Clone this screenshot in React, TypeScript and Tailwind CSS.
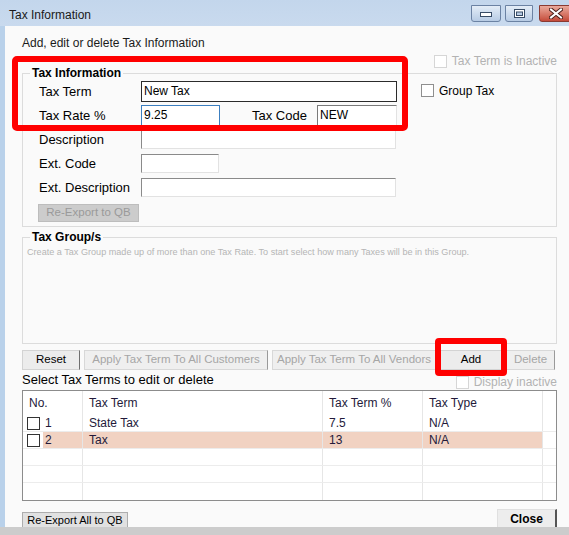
import React from "react"

const rows = [
  { no: "1", term: "State Tax", pct: "7.5", type: "N/A", selected: false },
  { no: "2", term: "Tax", pct: "13", type: "N/A", selected: true },
  { no: "", term: "", pct: "", type: "", selected: false },
  { no: "", term: "", pct: "", type: "", selected: false },
  { no: "", term: "", pct: "", type: "", selected: false },
]

const CheckBox = ({ className }: { className: string }) => (
  <span className={`inline-block shrink-0 bg-white border ${className}`} />
)

const TitleBar = () => (
  <div className="h-[26px] flex items-start bg-gradient-to-b from-[#c3d6ec] to-[#c9daee]">
    <span className="pl-[9px] pt-[7px] text-[12px] leading-[16px] text-[#1a1a1a]">
      Tax Information
    </span>
    <div className="ml-auto flex items-start gap-[4px] pt-[5px] -mr-[15px]">
      <div className="w-[30px] h-[17px] flex items-center justify-center border border-[#6b82a3] rounded-b-[3px] bg-gradient-to-b from-[#e4edf7] to-[#b7cbe4]">
        <svg width="12" height="6" viewBox="0 0 12 6">
          <rect x="0.5" y="1.5" width="11" height="4" fill="#fff" stroke="#384c66" />
        </svg>
      </div>
      <div className="w-[28px] h-[17px] flex items-center justify-center border border-[#6b82a3] rounded-b-[3px] bg-gradient-to-b from-[#e4edf7] to-[#b7cbe4]">
        <svg width="11" height="9" viewBox="0 0 11 9">
          <rect x="0.5" y="0.5" width="10" height="8" fill="#fff" stroke="#384c66" />
          <rect x="2.5" y="3" width="6" height="3.5" fill="#b7cbe4" stroke="#384c66" />
        </svg>
      </div>
      <div className="ml-[2px] w-[45px] h-[17px] flex items-center justify-start pl-[9px] border border-[#8a3a32] rounded-b-[3px] bg-gradient-to-b from-[#e9a99c] to-[#c44a3a]">
        <svg width="14" height="11" viewBox="0 0 14 11">
          <path d="M2 1.5 L12 9.5 M12 1.5 L2 9.5" stroke="#4a1f1a" strokeWidth="4" strokeLinecap="square" />
          <path d="M2 1.5 L12 9.5 M12 1.5 L2 9.5" stroke="#ffffff" strokeWidth="2" strokeLinecap="square" />
        </svg>
      </div>
    </div>
  </div>
)

const Label = ({ children }: { children: React.ReactNode }) => (
  <span className="w-[102px] shrink-0 text-[13px] leading-[22px] text-black">{children}</span>
)

const inputSunken = "bg-white border border-[#8a8a8a] border-r-[#e2e2e2] border-b-[#e2e2e2]"

export default function App() {
  return (
    <div className="relative w-[569px] h-[535px] overflow-hidden bg-[#cccccc] font-['Liberation_Sans',Arial,sans-serif]">
      <TitleBar />
      <div className="flex h-[501px]">
        <div className="w-[5px] bg-[#b9d1ea]" />
        <div className="flex-1 bg-[#fafafa] pl-[17px] pr-[12px] overflow-hidden">
          <div className="pt-[9px] text-[12px] leading-[16px] text-[#1a1a1a]">
            Add, edit or delete Tax Information
          </div>
          <div className="mt-[3px] h-[14px] flex items-center justify-end gap-[5px]">
            <CheckBox className="w-[13px] h-[13px] border-[#d6d6d6]" />
            <span className="text-[12px] text-[#b3b3b3]">Tax Term is Inactive</span>
          </div>

          <fieldset className="-mt-[2px] border border-[#dcdcdc] pb-[4px]">
            <legend className="ml-[7px] px-[2px] text-[12px] leading-[14px] font-bold text-black">
              Tax Information
            </legend>
            <div className="flex pt-[1px]">
              <div className="flex flex-col gap-[3px] pl-[16px]">
                <div className="flex h-[21px]">
                  <Label>Tax Term</Label>
                  <div className="w-[256px] h-[21px] bg-white border border-[#2b2b2b] px-[2px] text-[12px] leading-[19px] text-black">
                    New Tax
                  </div>
                </div>
                <div className="flex h-[21px]">
                  <Label>Tax Rate %</Label>
                  <div className="w-[79px] h-[21px] bg-white border border-[#3c7fc0] px-[2px] text-[12px] leading-[19px] text-black">
                    9.25
                  </div>
                  <span className="ml-[32px] w-[65px] text-[13px] leading-[22px] text-black">Tax Code</span>
                  <div className="w-[80px] h-[21px] bg-white border border-[#7a7a7a] border-r-[#e2e2e2] border-b-[#e2e2e2] px-[2px] text-[12px] leading-[19px] text-black">
                    NEW
                  </div>
                </div>
                <div className="flex h-[21px]">
                  <Label>Description</Label>
                  <div className={`w-[255px] h-[19px] mt-[1px] ${inputSunken}`} />
                </div>
                <div className="flex h-[21px]">
                  <Label>Ext. Code</Label>
                  <div className={`w-[78px] h-[19px] mt-[1px] ${inputSunken}`} />
                </div>
                <div className="flex h-[21px]">
                  <Label>Ext. Description</Label>
                  <div className={`w-[255px] h-[19px] mt-[1px] ${inputSunken}`} />
                </div>
                <div className="mt-[3px] -ml-[1px] w-[101px] h-[18px] flex items-center justify-center bg-[#cccccc] border border-[#bdbdbd] text-[11.5px] text-[#9a9a9a]">
                  Re-Export to QB
                </div>
              </div>
              <div className="ml-[24px] mt-[3px] h-[13px] flex items-center gap-[5px]">
                <CheckBox className="w-[13px] h-[13px] border-[#8f8f8f]" />
                <span className="text-[12px] text-black">Group Tax</span>
              </div>
            </div>
          </fieldset>

          <fieldset className="mt-[3px] h-[114px] border border-[#dcdcdc]">
            <legend className="ml-[7px] px-[2px] text-[12px] leading-[14px] font-bold text-black">
              Tax Group/s
            </legend>
            <div className="mt-[2px] pl-[4px] text-[9.1px] leading-[12px] text-[#b5b5b5] whitespace-nowrap">
              Create a Tax Group made up of more than one Tax Rate. To start select how many Taxes will be in this Group.
            </div>
          </fieldset>

          <div className="mt-[6px] flex gap-[4px] h-[20px] text-[11.5px] whitespace-nowrap">
            <div className="w-[58px] flex items-center justify-center bg-[#ececec] border border-[#d3d3d3] border-r-[#6f6f6f] text-black">
              Reset
            </div>
            <div className="w-[184px] flex items-center justify-center bg-[#efefef] border border-[#d8d8d8] border-r-[#9a9a9a] text-[#a6a6a6]">
              Apply Tax Term To All Customers
            </div>
            <div className="w-[164px] flex items-center justify-center bg-[#efefef] border border-[#d8d8d8] border-r-[#9a9a9a] text-[#a6a6a6]">
              Apply Tax Term To All Vendors
            </div>
            <div className="w-[62px] flex items-center justify-center bg-[#ececec] border border-[#d3d3d3] text-black">
              Add
            </div>
            <div className="w-[49px] flex items-center justify-center bg-[#efefef] border border-[#d8d8d8] border-r-[#9a9a9a] text-[#a6a6a6]">
              Delete
            </div>
          </div>

          <div className="mt-[2px] h-[16px] flex items-center">
            <span className="text-[13px] leading-[16px] text-black">Select Tax Terms to edit or delete</span>
            <div className="ml-auto flex items-center gap-[5px] pt-[4px]">
              <CheckBox className="w-[13px] h-[13px] border-[#d6d6d6]" />
              <span className="text-[12px] text-[#b3b3b3]">Display inactive</span>
            </div>
          </div>

          <div className="mt-[2px] border border-[#8c8c8c] bg-white text-[12px] text-[#231a3a]">
            <div className="flex h-[24px]">
              <div className="w-[60px] pl-[6px] flex items-center border-r border-[#e6e6e6]">No.</div>
              <div className="w-[240px] pl-[6px] flex items-center border-r border-[#e6e6e6]">Tax Term</div>
              <div className="w-[100px] pl-[6px] flex items-center border-r border-[#e6e6e6]">Tax Term %</div>
              <div className="w-[120px] pl-[6px] flex items-center border-r border-[#e6e6e6]">Tax Type</div>
              <div className="flex-1" />
            </div>
            {rows.map((r, i) => (
              <div key={i} className="flex h-[17px] border-b border-[#ececec] last:border-b-0">
                <div className="w-[60px] flex border-r border-[#e6e6e6]">
                  <div className="w-[20px] flex items-center pl-[4px]">
                    {r.no && <CheckBox className="w-[13px] h-[13px] border-[#333333]" />}
                  </div>
                  <div className={`flex-1 flex items-center pl-[2px] ${r.selected ? "bg-[#f1d2c2]" : ""}`}>{r.no}</div>
                </div>
                <div className={`w-[240px] pl-[6px] flex items-center border-r border-[#e6e6e6] ${r.selected ? "bg-[#f1d2c2]" : ""}`}>{r.term}</div>
                <div className={`w-[100px] pl-[6px] flex items-center border-r border-[#e6e6e6] ${r.selected ? "bg-[#f1d2c2]" : ""}`}>{r.pct}</div>
                <div className={`w-[120px] pl-[6px] flex items-center border-r border-[#e6e6e6] ${r.selected ? "bg-[#f1d2c2]" : ""}`}>{r.type}</div>
                <div className="flex-1" />
              </div>
            ))}
          </div>

          <div className="mt-[8px] flex items-start justify-between">
            <div className="mt-[3px] w-[106px] h-[20px] flex items-start justify-center bg-[#e1e1e1] border border-[#adadad] text-[11px] leading-[14px] text-black whitespace-nowrap">
              Re-Export All to QB
            </div>
            <div className="w-[60px] h-[20px] flex items-center justify-center bg-[#ededed] border border-[#e0e0e0] border-r-2 border-r-[#555555] text-[12px] font-bold text-black">
              Close
            </div>
          </div>
        </div>
      </div>

      <div className="absolute left-[12px] top-[56px] w-[396px] h-[75px] border-[6px] border-[#ff0000] rounded-[5px]" />
      <div className="absolute left-[435px] top-[338px] w-[72px] h-[38px] border-[6px] border-[#ff0000] rounded-[4px]" />
    </div>
  )
}
